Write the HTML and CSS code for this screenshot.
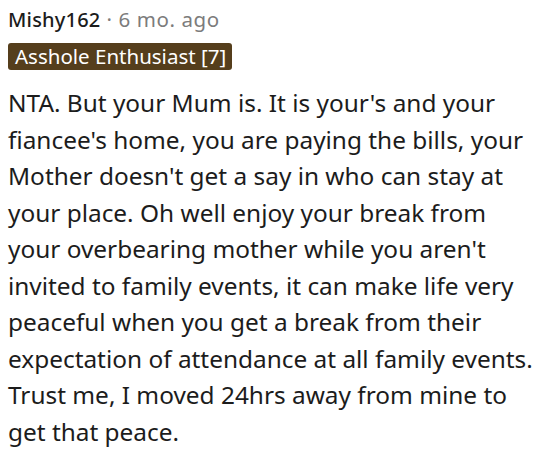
FILE: index.html
```
<!DOCTYPE html>
<html>
<head>
<meta charset="utf-8">
<link rel="stylesheet" href="styles.css">
</head>
<body>
<div class="comment">
  <div class="meta"><span class="author">Mishy162</span><span class="time"> · 6 mo. ago</span></div>
  <div class="flair-row"><span class="flair">Asshole Enthusiast [7]</span></div>
  <p class="body">NTA. But your Mum is. It is your's and your fiancee's home, you are paying the bills, your Mother doesn't get a say in who can stay at your place. Oh well enjoy your break from your overbearing mother while you aren't invited to family events, it can make life very peaceful when you get a break from their expectation of attendance at all family events. Trust me, I moved 24hrs away from mine to get that peace.</p>
</div>
</body>
</html>
```
FILE: styles.css
```
html, body { margin: 0; padding: 0; background: #fff; }
.comment { padding: 5px 0 0 8px; }
.meta { font-family: "Noto Sans", sans-serif; font-size: 20px; line-height: 28px; }
.author { color: #1c1c1c; font-weight: 500; letter-spacing: 0.2px; }
.time { color: #7c7c7c; font-size: 20.5px; letter-spacing: 0.6px; }
.flair-row { margin-top: 9px; height: 27px; }
.flair { display: inline-block; background: #553e1c; color: #fff; font-family: "Noto Sans", sans-serif; font-size: 20.5px; line-height: 27px; height: 27px; padding: 0 6px 0 7px; border-radius: 3px; }
.body { margin: 15px 0 0 0; font-family: "Noto Sans", sans-serif; font-size: 24.4px; line-height: 36.5px; color: #1c1c1c; }
```
